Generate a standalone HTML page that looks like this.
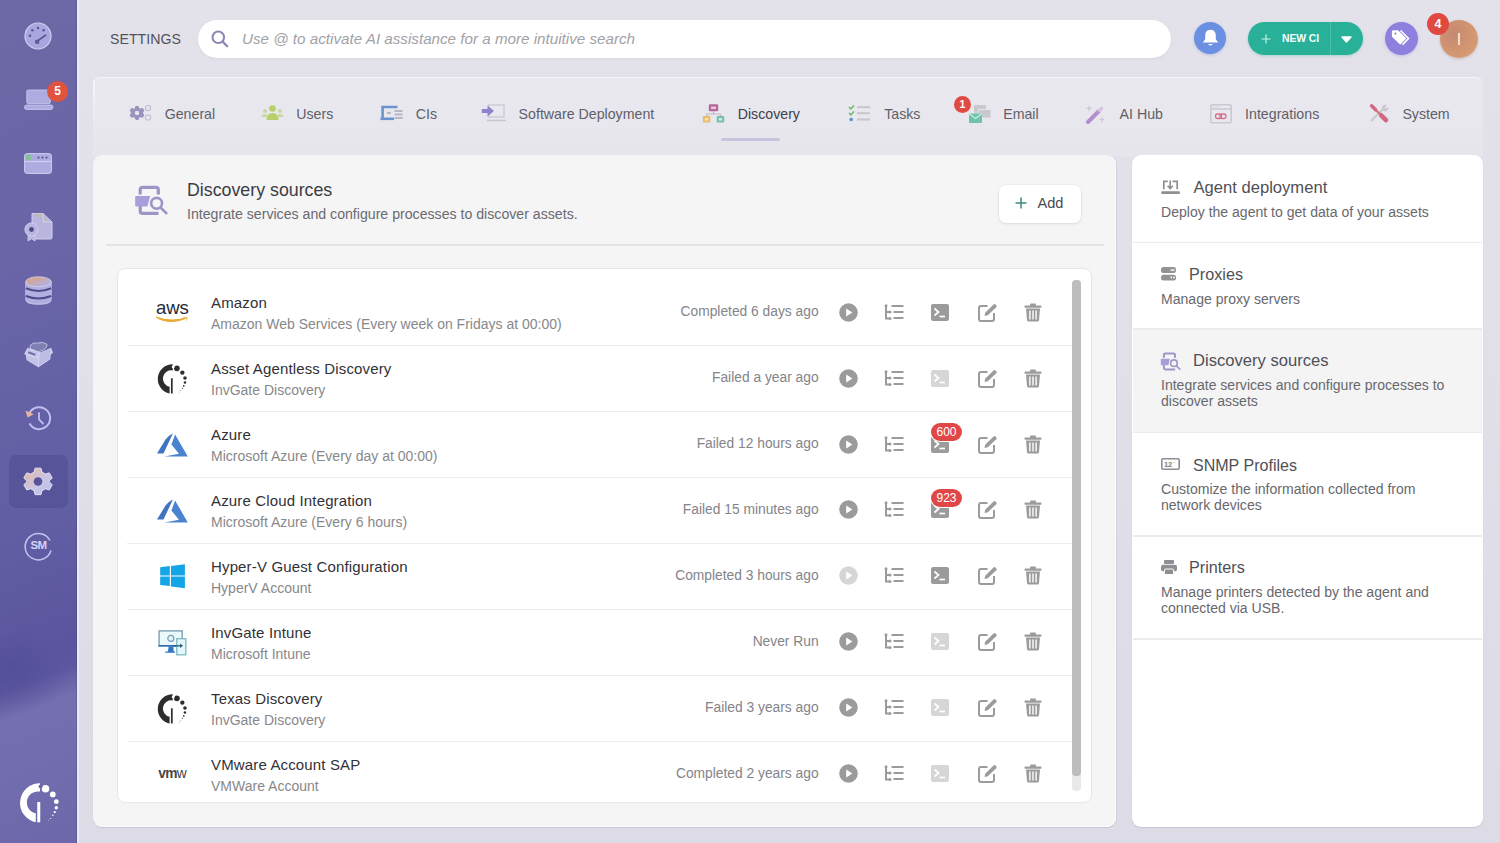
<!DOCTYPE html><html><head><meta charset='utf-8'><style>
*{box-sizing:border-box;margin:0;padding:0}
html,body{width:1500px;height:843px;overflow:hidden}
body{font-family:"Liberation Sans",sans-serif;background:linear-gradient(180deg,#e3e2eb 0%,#e1e0e9 45%,#dcdbe6 100%);position:relative;color:#333}
.a{position:absolute}
.t{position:absolute;white-space:nowrap;line-height:normal}
svg{position:absolute;overflow:visible}
</style></head><body>
<div class="a" style="left:0;top:0;width:77px;height:843px;background:linear-gradient(158.7deg,#6d69a6 0%,#6864a7 35%,#625ea4 62%,#5a559e 77%,#5c57a0 79.4%,#7470b0 82.8%,#716dae 89%,#6b67aa 100%)"></div>
<div class="a" style="left:0;top:560px;width:77px;height:200px;background:radial-gradient(ellipse 55px 45px at 12px 112px,rgba(78,72,148,.45),rgba(78,72,148,0))"></div>
<div class="a" style="left:76px;top:0;width:1px;height:843px;background:rgba(60,55,110,.25)"></div>
<div class="a" style="left:77px;top:0;width:1.5px;height:843px;background:rgba(240,240,252,.7)"></div>
<svg style="left:24px;top:22px" width="28" height="28" viewBox="0 0 28 28">
<circle cx="14" cy="14" r="13" fill="#a9a6dd" stroke="#cfcdf2" stroke-width="1.2"/>
<circle cx="14" cy="6" r="1.3" fill="#5d5899"/><circle cx="8.4" cy="8.2" r="1.3" fill="#5d5899"/><circle cx="19.6" cy="8.2" r="1.3" fill="#5d5899"/><circle cx="6" cy="13.8" r="1.3" fill="#5d5899"/>
<path d="M12 20 L21.5 13.2" stroke="#5d5899" stroke-width="1.8" stroke-linecap="round"/>
<rect x="11.2" y="17.8" width="4" height="4" rx="0.5" fill="#5d5899"/>
</svg>
<svg style="left:24px;top:89px" width="30" height="22" viewBox="0 0 30 22">
<rect x="2.8" y="1" width="23.6" height="13.6" rx="1.5" fill="#aeabe0" stroke="#cfcdf2" stroke-width="0.8"/>
<rect x="0.5" y="16" width="28.5" height="4.5" rx="2.2" fill="#aeabe0" stroke="#cfcdf2" stroke-width="0.8"/>
</svg>
<div class="a" style="left:47px;top:81px;width:21px;height:21px;border-radius:50%;background:#e0533f;color:#fff;font-size:12px;font-weight:700;text-align:center;line-height:21px">5</div>
<svg style="left:24px;top:153px" width="28" height="21" viewBox="0 0 28 21">
<rect x="0.6" y="0.6" width="26.8" height="19.8" rx="2.5" fill="#aeabe0" stroke="#cfcdf2" stroke-width="1"/>
<path d="M0.6 8.5 H27.4" stroke="#cfcdf2" stroke-width="1.2"/>
<rect x="2" y="1.8" width="5" height="5.5" fill="#7cc38a" opacity=".75"/>
<circle cx="14.5" cy="4.6" r="1.1" fill="#5d5899"/><circle cx="18.5" cy="4.6" r="1.1" fill="#5d5899"/><circle cx="22.5" cy="4.6" r="1.1" fill="#5d5899"/>
</svg>
<svg style="left:24px;top:212px" width="30" height="30" viewBox="0 0 30 30">
<path d="M8 1.5 H19 L28 10 V25.5 Q28 27 26.5 27 H9.5 Q8 27 8 25.5 Z" fill="#b9b5de" stroke="#d2d0ef" stroke-width="1"/>
<path d="M8 1.5 H19 V10 H28" fill="#c8c094" opacity=".55"/>
<path d="M19 1.5 V10 H28" fill="none" stroke="#d2d0ef" stroke-width="1"/>
<path d="M4 20 L4 29 L7.5 26.8 L11 29 L11 20 Z" fill="#b9b5de" stroke="#d2d0ef" stroke-width=".8"/>
<circle cx="7.5" cy="17.5" r="6.6" fill="#b9b5de" stroke="#d2d0ef" stroke-width="1"/>
<circle cx="7.5" cy="17.5" r="2.4" fill="#4f4a8a"/>
</svg>
<svg style="left:25px;top:276px" width="27" height="29" viewBox="0 0 27 29">
<defs><linearGradient id="dbg" x1="0" y1="0" x2="1" y2="1"><stop offset="0" stop-color="#e3a06e"/><stop offset=".8" stop-color="#b3b0e2"/></linearGradient></defs>
<path d="M0.8 5.5 V23.5 Q0.8 28.3 13.5 28.3 Q26.2 28.3 26.2 23.5 V5.5 Z" fill="#b1aee0" stroke="#d2d0ef" stroke-width=".8"/>
<path d="M0.8 12.3 Q13.5 17.5 26.2 12.3" fill="none" stroke="#4e4a8c" stroke-width="2"/>
<path d="M0.8 20 Q13.5 25 26.2 20" fill="none" stroke="#4e4a8c" stroke-width="2"/>
<ellipse cx="13.5" cy="5.8" rx="12.7" ry="5" fill="url(#dbg)" stroke="#d2d0ef" stroke-width=".8"/>
</svg>
<svg style="left:20px;top:336px" width="38" height="36" viewBox="0 0 38 36">
<path d="M10.5 9 Q13.5 5.8 17.5 7.2 Q22 5.2 27 8.2 Q27.5 11.5 24 13.5 L18.5 16 L11 13.2 Q9.6 11 10.5 9 Z" fill="#7f80b2" stroke="#c6c4ec" stroke-width=".9"/>
<path d="M18.8 17.6 L30.8 12.4 L29.8 23.2 L18.4 30.8 Z" fill="#bdbbe2" stroke="#d6d4f4" stroke-width=".9" stroke-linejoin="round"/>
<path d="M6.4 19.5 L18.8 17.6 L18.4 30.8 L7 23.8 Z" fill="#c3c1e6" stroke="#d6d4f4" stroke-width=".9" stroke-linejoin="round"/>
<path d="M4.7 18 L7.7 12.2 L19.8 16.6 L16.8 21.6 Z" fill="#c6c4ea" stroke="#d8d6f5" stroke-width=".9" stroke-linejoin="round"/>
<path d="M8.6 15.2 L15.8 17.9 L14.8 19.8 L8 17.3 Z" fill="#6f6ea8"/>
<path d="M30.8 12.4 L32.6 16.8 L29.9 18.2" fill="#c6c4ea" stroke="#d8d6f5" stroke-width=".9" stroke-linejoin="round"/>
</svg>
<svg style="left:24px;top:404px" width="28" height="28" viewBox="0 0 28 28">
<path d="M5.2 9.5 A11 11 0 1 1 5.5 19.5" fill="none" stroke="#c1bff0" stroke-width="2"/>
<path d="M1.5 6.5 L3.5 13.5 L9.8 10.2 Z" fill="#e9b49a"/>
<path d="M15 9 V15.5 L19 19.5" fill="none" stroke="#c1bff0" stroke-width="1.8" stroke-linecap="round"/>
</svg>
<div class="a" style="left:9px;top:455px;width:59px;height:53px;border-radius:7px;background:#58549a"></div>
<svg style="left:24px;top:467px" width="28" height="29" viewBox="0 0 28 29">
<defs><linearGradient id="gg" x1="0" y1="0" x2="1" y2="1"><stop offset="0" stop-color="#e8b694"/><stop offset=".55" stop-color="#c9c6e6"/><stop offset="1" stop-color="#bdbae6"/></linearGradient></defs>
<path d="M11 1 H17 L18 5 L21.5 7 L25.5 5.8 L28.5 11 L25.5 14 L25.5 15 L28.5 18 L25.5 23.2 L21.5 22 L18 24 L17 28 H11 L10 24 L6.5 22 L2.5 23.2 L-0.5 18 L2.5 15 L2.5 14 L-0.5 11 L2.5 5.8 L6.5 7 L10 5 Z" fill="url(#gg)" stroke="#e4e2f6" stroke-width="1" stroke-linejoin="round" transform="translate(0.3,0.2) scale(0.98)"/>
<circle cx="14" cy="14.5" r="4.3" fill="#58549a"/>
</svg>
<svg style="left:24px;top:531px" width="29" height="29" viewBox="0 0 29 29">
<path d="M26 9.5 A13.2 13.2 0 1 0 27 19.5" fill="none" stroke="#c6c3f0" stroke-width="1.5"/>
</svg>
<div class="t" style="left:24px;width:29px;text-align:center;top:538.5px;font-size:11.5px;color:#d4d2f5;letter-spacing:-0.5px;font-weight:700;-webkit-text-stroke:0px">SM</div>
<svg style="left:18.7px;top:782.6px" width="40" height="40" viewBox="0 0 40 40">
<path d="M21 0.3 A19.7 19.7 0 0 0 16.8 39.3 L16.8 30.3 A11 11 0 0 1 21 8.6 Z" fill="#ffffff"/>
<rect x="18.25" y="19" width="3" height="20.3" fill="#ffffff"/>
<circle cx="26.5" cy="5.8" r="3.8" fill="#ffffff"/>
<circle cx="21.6" cy="3.6" r="2" fill="#6b67aa"/>
<circle cx="33.8" cy="11.4" r="2.9" fill="#ffffff"/>
<circle cx="37.3" cy="18.7" r="2.4" fill="#ffffff"/>
<circle cx="37.3" cy="24.7" r="1.7" fill="#ffffff"/>
<circle cx="35.7" cy="29.1" r="1.15" fill="#ffffff"/>
<circle cx="33.8" cy="32.3" r=".8" fill="#ffffff"/>
<circle cx="31.6" cy="35.5" r=".6" fill="#ffffff"/>
<circle cx="29.4" cy="37.4" r=".45" fill="#ffffff"/>
</svg>
<div class="t" style="left:110px;top:30.75px;font-size:14.2px;color:#53525c;font-weight:400;font-style:normal;">SETTINGS</div>
<div class="a" style="left:198px;top:20px;width:973px;height:38px;border-radius:19px;background:#fff;box-shadow:0 1px 2px rgba(140,140,170,.15)"></div>
<svg style="left:211px;top:30px" width="18" height="18" viewBox="0 0 18 18">
<circle cx="7.3" cy="7.3" r="5.8" fill="none" stroke="#8985b5" stroke-width="2"/>
<path d="M11.6 11.6 L16.2 16.2" stroke="#8985b5" stroke-width="2.2" stroke-linecap="round"/></svg>
<div class="t" style="left:242px;top:29.54px;font-size:15.2px;color:#a2a2a8;font-weight:400;font-style:italic;">Use @ to activate AI assistance for a more intuitive search</div>
<div class="a" style="left:1194px;top:22px;width:32px;height:32px;border-radius:50%;background:#6b90e1;box-shadow:0 1px 3px rgba(80,110,200,.3)"></div>
<svg style="left:1201.5px;top:29px" width="17" height="18" viewBox="0 0 17 18">
<path d="M8.5 0.8 C4.6 0.8 3.2 3.8 3.2 7 V10.2 L0.8 13.6 H16.2 L13.8 10.2 V7 C13.8 3.8 12.4 0.8 8.5 0.8 Z" fill="#fff"/>
<path d="M6.2 15 Q8.5 18 10.8 15 Z" fill="#fff"/></svg>
<div class="a" style="left:1248px;top:22px;width:115px;height:33px;border-radius:17px;background:#29b099;box-shadow:0 1px 3px rgba(40,160,130,.3)"></div>
<div class="a" style="left:1330px;top:22px;width:1px;height:33px;background:#45c1ab"></div>
<svg style="left:1261px;top:34px" width="10" height="10" viewBox="0 0 10 10"><path d="M5 0.5 V9.5 M0.5 5 H9.5" stroke="#c9f2e8" stroke-width="1.2"/></svg>
<div class="t" style="left:1282px;top:32.89px;font-size:10.4px;color:#f4fffc;font-weight:700;font-style:normal;letter-spacing:-0.1px">NEW CI</div>
<svg style="left:1341px;top:36px" width="11" height="7" viewBox="0 0 11 7"><path d="M1 1 H10 L5.5 6 Z" fill="#fff" stroke="#fff" stroke-width="1.4" stroke-linejoin="round"/></svg>
<div class="a" style="left:1385px;top:22px;width:33px;height:33px;border-radius:50%;background:#8e80de;box-shadow:0 1px 3px rgba(120,100,210,.3)"></div>
<svg style="left:1391px;top:29px" width="22" height="18" viewBox="0 0 22 18">
<path d="M9.5 1.5 L17.5 9.5 L11.5 15.8" fill="none" stroke="#fff" stroke-width="1.6"/>
<path d="M1.5 2 V7.2 L9.2 14.8 L14.5 9.5 L6.8 1.8 Z" fill="#fff" stroke="#fff" stroke-width="1.2" stroke-linejoin="round"/>
<circle cx="4.4" cy="4.6" r="1.1" fill="#8e80de"/></svg>
<div class="a" style="left:1440px;top:20px;width:38px;height:38px;border-radius:50%;background:radial-gradient(circle at 35% 35%,#c78872,#d49a72 70%,#dba478);box-shadow:0 1px 3px rgba(150,100,80,.3)"></div>
<div class="a" style="left:1458px;top:33px;width:2px;height:12px;background:#f5dfc9"></div>
<div class="a" style="left:1427px;top:13px;width:22px;height:22px;border-radius:50%;background:#e0493f;color:#fff;font-size:12.5px;font-weight:700;text-align:center;line-height:22px">4</div>
<div class="a" style="left:93px;top:77px;width:1390px;height:80px;border-radius:7px 7px 0 0;background:linear-gradient(180deg,#e9e8ef 0%,#e8e7ee 60%,#e6e5ec 100%);border-top:1.5px solid #f5f5f9"></div>
<div class="t" style="left:164.7px;top:105.65px;font-size:14.2px;color:#605f69;font-weight:400;font-style:normal;">General</div>
<div class="t" style="left:296.2px;top:105.65px;font-size:14.2px;color:#605f69;font-weight:400;font-style:normal;">Users</div>
<div class="t" style="left:415.8px;top:105.65px;font-size:14.2px;color:#605f69;font-weight:400;font-style:normal;">CIs</div>
<div class="t" style="left:518.6px;top:105.65px;font-size:14.2px;color:#605f69;font-weight:400;font-style:normal;">Software Deployment</div>
<div class="t" style="left:737.7px;top:105.65px;font-size:14.2px;color:#3f3f48;font-weight:400;font-style:normal;">Discovery</div>
<div class="t" style="left:884.2px;top:105.65px;font-size:14.2px;color:#605f69;font-weight:400;font-style:normal;">Tasks</div>
<div class="t" style="left:1003.2px;top:105.65px;font-size:14.2px;color:#605f69;font-weight:400;font-style:normal;">Email</div>
<div class="t" style="left:1119.6000000000001px;top:105.65px;font-size:14.2px;color:#605f69;font-weight:400;font-style:normal;">AI Hub</div>
<div class="t" style="left:1245.1000000000001px;top:105.65px;font-size:14.2px;color:#605f69;font-weight:400;font-style:normal;">Integrations</div>
<div class="t" style="left:1402.4px;top:105.65px;font-size:14.2px;color:#605f69;font-weight:400;font-style:normal;">System</div>
<div class="a" style="left:93px;top:80px;width:2px;height:50px;background:linear-gradient(180deg,rgba(246,246,250,.9),rgba(246,246,250,0))"></div>
<div class="a" style="left:721px;top:138px;width:59px;height:3px;border-radius:2px;background:#c8c4de"></div>
<svg style="left:129px;top:104px" width="23" height="18" viewBox="0 0 23 18">
<path d="M7 2.5 L9 2.5 L9.6 4.4 L11.4 5.4 L13.2 4.6 L14.6 6.4 L13.6 8.2 V9.6 L14.6 11.4 L13.2 13.2 L11.4 12.4 L9.6 13.4 L9 15.3 H7 L6.4 13.4 L4.6 12.4 L2.8 13.2 L1.4 11.4 L2.4 9.6 V8.2 L1.4 6.4 L2.8 4.6 L4.6 5.4 L6.4 4.4 Z" fill="#9b93bd" stroke="#9b93bd" stroke-width="1.2" stroke-linejoin="round"/>
<circle cx="8" cy="8.9" r="2.2" fill="#e8e7ee"/>
<circle cx="19" cy="4" r="2.6" fill="none" stroke="#c6c2da" stroke-width="1.3"/>
<circle cx="19" cy="13.5" r="2.6" fill="none" stroke="#c6c2da" stroke-width="1.3"/>
</svg>
<svg style="left:261px;top:104px" width="23" height="18" viewBox="0 0 23 18">
<circle cx="11.5" cy="4.5" r="3.3" fill="#b8d06a"/>
<path d="M5.5 16 Q5.5 9 11.5 9 Q17.5 9 17.5 16 Z" fill="#b8d06a"/>
<circle cx="4" cy="7" r="2" fill="#cbd6a4"/><circle cx="19" cy="7" r="2" fill="#cbd6a4"/>
<path d="M0.5 13 Q0.5 10 4 10 Q6 10 6.5 11.5 L5.5 13 Z" fill="#cbd6a4"/><path d="M22.5 13 Q22.5 10 19 10 Q17 10 16.5 11.5 L17.5 13 Z" fill="#cbd6a4"/>
</svg>
<svg style="left:380px;top:104px" width="23" height="18" viewBox="0 0 23 18">
<path d="M2.6 14 V3 H17.5" fill="none" stroke="#6b93cf" stroke-width="2.6"/>
<path d="M0.5 14.8 H14" stroke="#6b93cf" stroke-width="2.6"/>
<rect x="14.5" y="6" width="8" height="2" fill="#b3b7c6"/><rect x="14.5" y="9.5" width="8" height="2" fill="#b3b7c6"/><rect x="14.5" y="13" width="8" height="2" fill="#b3b7c6"/>
<rect x="7" y="8" width="4" height="2" fill="#b3b7c6"/>
</svg>
<svg style="left:481px;top:103px" width="26" height="20" viewBox="0 0 26 20">
<rect x="7.5" y="2" width="15.5" height="12" fill="none" stroke="#c7c5d3" stroke-width="1.2"/>
<path d="M6 17.5 H25" stroke="#c7c5d3" stroke-width="1.6"/>
<path d="M0.8 6 H6.5 V2.5 L13 8 L6.5 13.5 V10 H0.8 Z" fill="#8f82cc"/>
</svg>
<svg style="left:702px;top:104px" width="23" height="20" viewBox="0 0 23 20">
<rect x="6.8" y="0.3" width="9.4" height="7" rx="1.2" fill="#b7679b"/><rect x="9" y="2.6" width="5" height="2.4" fill="#e9c6dc"/>
<path d="M11.5 7 V10 M4.5 10 H18.5 M4.5 10 V12 M18.5 10 V12" stroke="#c3b8c0" stroke-width="1.2"/>
<rect x="0.8" y="12" width="7.5" height="6.5" rx="1" fill="#e9bd6c"/><rect x="14.7" y="12" width="7.5" height="6.5" rx="1" fill="#73bea8"/>
<rect x="2.8" y="14" width="3.5" height="2.5" fill="#f8e2b0"/><rect x="16.7" y="14" width="3.5" height="2.5" fill="#c8ece3"/>
</svg>
<svg style="left:848px;top:104px" width="23" height="18" viewBox="0 0 23 18">
<path d="M1 3 L2.8 4.8 L6 1.5" fill="none" stroke="#6bbf6a" stroke-width="1.6"/>
<path d="M1 9 L2.8 10.8 L6 7.5" fill="none" stroke="#6bbf6a" stroke-width="1.6"/>
<circle cx="3.2" cy="15.5" r="1.8" fill="#5a8fc0"/>
<rect x="9" y="2.2" width="13" height="2" fill="#c6c6cc"/><rect x="9" y="8.2" width="13" height="2" fill="#c6c6cc"/><rect x="9" y="14.5" width="13" height="2" fill="#c6c6cc"/>
</svg>
<svg style="left:968px;top:104px" width="24" height="20" viewBox="0 0 24 20">
<rect x="6" y="1" width="12" height="8" rx="1" fill="#c8c8ce"/>
<rect x="10" y="5.5" width="13" height="8.5" rx="1" fill="#c8c8ce" stroke="#e8e7ee" stroke-width="1"/>
<rect x="1" y="9.5" width="13" height="9.5" rx="1" fill="#6dc4a8"/>
<path d="M1 9.5 L7.5 14.5 L14 9.5" fill="none" stroke="#c9efe3" stroke-width="1.3"/>
</svg>
<div class="a" style="left:954px;top:96px;width:17px;height:17px;border-radius:50%;background:#df4a43;color:#fff;font-size:10.5px;font-weight:700;text-align:center;line-height:17px;box-shadow:0 0 0 1px #e9e8ef">1</div>
<svg style="left:1085px;top:104px" width="20" height="20" viewBox="0 0 20 20">
<path d="M3 18 L14 7" stroke="#b58ecf" stroke-width="4" stroke-linecap="round"/>
<path d="M14.5 6.5 L16.5 4.5" stroke="#d6c4e4" stroke-width="3.5" stroke-linecap="round"/>
<path d="M4 2 V7 M1.5 4.5 H6.5" stroke="#cac4d6" stroke-width="1.2"/>
<path d="M17 13 V18 M14.5 15.5 H19.5" stroke="#cac4d6" stroke-width="1.2"/>
</svg>
<svg style="left:1210px;top:104px" width="22" height="20" viewBox="0 0 22 20">
<rect x="0.8" y="0.8" width="20.4" height="18" rx="1.5" fill="#e9e8ef" stroke="#c9c8d0" stroke-width="1.5"/>
<path d="M0.8 5 H21" stroke="#c9c8d0" stroke-width="1.5"/>
<circle cx="3.5" cy="3" r=".7" fill="#c9c8d0"/><circle cx="6" cy="3" r=".7" fill="#c9c8d0"/><circle cx="8.5" cy="3" r=".7" fill="#c9c8d0"/>
<rect x="5.5" y="10" width="6" height="4.5" rx="2.2" fill="none" stroke="#d0708f" stroke-width="1.3"/>
<rect x="10" y="10" width="6" height="4.5" rx="2.2" fill="none" stroke="#d0708f" stroke-width="1.3"/>
</svg>
<svg style="left:1369px;top:104px" width="20" height="19" viewBox="0 0 20 19">
<path d="M2.5 16.5 L14 5" stroke="#c9c9cd" stroke-width="2.2" stroke-linecap="round"/>
<path d="M13 2.5 Q15 0.2 18 1 L16 3.6 L17 4.8 L19.2 2.8 Q19.8 6 17.2 7.2 Q15.5 7.8 14 6.5 Z" fill="#c9c9cd"/>
<path d="M2.6 1.8 L6.6 5.8" stroke="#d4687f" stroke-width="3.6" stroke-linecap="round"/>
<path d="M6 5.2 L12.5 11.6" stroke="#d4687f" stroke-width="1.9"/>
<path d="M12.2 11.3 L17 16.2" stroke="#d4687f" stroke-width="4.6" stroke-linecap="round"/>
</svg>
<div class="a" style="left:93px;top:155px;width:1023px;height:672px;border-radius:9px;background:#f5f5f6;box-shadow:inset -1px -1px 0 #fbfbfd,1px 0 0 rgba(190,190,200,.35),0 1px 1px rgba(150,150,165,.3)"></div>
<svg style="left:134px;top:185px" width="34" height="31" viewBox="0 0 34 31">
<path d="M6.2 9.5 V4.6 Q6.2 2.3 8.5 2.3 H22 Q24.3 2.3 24.3 4.6 V9.5" fill="none" stroke="#9c96c6" stroke-width="3.2"/>
<path d="M6.2 21 V26 Q6.2 28.4 8.6 28.4 H24.5" fill="none" stroke="#9c96c6" stroke-width="3.2"/>
<path d="M2.2 11.1 H16.2 L13.4 21.6 H2.2 Q1.2 21.6 1.2 20.6 V12.1 Q1.2 11.1 2.2 11.1 Z" fill="#a79fdc"/>
<circle cx="22.6" cy="18.3" r="5.6" fill="#f5f5f6" stroke="#f5f5f6" stroke-width="4.5"/>
<circle cx="22.6" cy="18.3" r="5.4" fill="#f5f5f6" stroke="#9c96c6" stroke-width="2.6"/>
<path d="M27 23 L32.4 28.2" stroke="#9c96c6" stroke-width="2.6" stroke-linecap="round"/>
</svg>
<div class="t" style="left:187px;top:180.29px;font-size:17.8px;color:#3c3c42;font-weight:400;font-style:normal;">Discovery sources</div>
<div class="t" style="left:187px;top:205.69px;font-size:14.15px;color:#6a6a70;font-weight:400;font-style:normal;">Integrate services and configure processes to discover assets.</div>
<div class="a" style="left:999px;top:185px;width:82px;height:38px;border-radius:7px;background:#fff;box-shadow:0 1px 3px rgba(0,0,0,.09),0 0 0 1px rgba(0,0,0,.025)"></div>
<svg style="left:1015px;top:197px" width="12" height="12" viewBox="0 0 12 12"><path d="M6 0.5 V11.5 M0.5 6 H11.5" stroke="#3f8c7c" stroke-width="1.5"/></svg>
<div class="t" style="left:1037.5px;top:195.19px;font-size:14.6px;color:#4a4a50;font-weight:400;font-style:normal;">Add</div>
<div class="a" style="left:106px;top:244px;width:998px;height:1.5px;background:#e3e3e6"></div>
<div class="a" style="left:117px;top:268px;width:975px;height:535px;border-radius:8px;background:#fff;border:1px solid #e6e6e9"></div>
<div class="a" style="left:1072px;top:280px;width:9px;height:511px;border-radius:4px;background:#e8e8e8"></div>
<div class="a" style="left:1072px;top:280px;width:9px;height:496px;border-radius:4px;background:#bdbdbd"></div>
<div class="a" style="left:127px;top:345.0px;width:945px;height:1.2px;background:#ececee"></div>
<div class="t" style="left:211px;top:293.83px;font-size:15px;color:#313136;font-weight:400;font-style:normal;letter-spacing:.15px">Amazon</div>
<div class="t" style="left:211px;top:315.53px;font-size:14px;color:#88888b;font-weight:400;font-style:normal;">Amazon Web Services (Every week on Fridays at 00:00)</div>
<div class="t" style="right:681.4px;top:304.41px;font-size:13.8px;color:#848489;">Completed 6 days ago</div>
<svg style="left:838.5px;top:302.8px" width="19" height="19" viewBox="0 0 19 19"><circle cx="9.5" cy="9.5" r="9.3" fill="#9b9b9b"/><path d="M7.2 5.6 L13.4 9.5 L7.2 13.4 Z" fill="#fff"/></svg>
<svg style="left:884px;top:303.8px" width="20" height="17" viewBox="0 0 20 17">
<path d="M2 1.5 V14.5 H5" fill="none" stroke="#9b9b9b" stroke-width="2"/><path d="M2 8 H5" stroke="#9b9b9b" stroke-width="2"/>
<rect x="7.5" y="1" width="12" height="2" fill="#9b9b9b"/><rect x="9.5" y="7" width="10" height="2" fill="#9b9b9b"/><rect x="9.5" y="13" width="10" height="2" fill="#9b9b9b"/>
<circle cx="2" cy="1.8" r="1.5" fill="#9b9b9b"/><circle cx="6" cy="8" r="1.5" fill="#9b9b9b"/><circle cx="6" cy="14.5" r="1.5" fill="#9b9b9b"/>
</svg>
<svg style="left:931px;top:303.8px" width="18" height="17" viewBox="0 0 18 17"><rect x="0" y="0" width="18" height="17" rx="2" fill="#9b9b9b"/><path d="M3.5 4.5 L7.5 8 L3.5 11.5" fill="none" stroke="#fff" stroke-width="1.7"/><path d="M8.5 12.5 H14" stroke="#fff" stroke-width="1.7"/></svg>
<svg style="left:977.5px;top:302.8px" width="20" height="19" viewBox="0 0 20 19">
<path d="M9.5 3 H3 Q1 3 1 5 V16 Q1 18 3 18 H14 Q16 18 16 16 V10" fill="none" stroke="#9b9b9b" stroke-width="2"/>
<path d="M6.5 13 L7.2 9.8 L15.5 1.5 Q16.5 0.6 17.5 1.5 L18.2 2.2 Q19 3.2 18.2 4.2 L9.8 12.3 Z" fill="#9b9b9b"/>
</svg>
<svg style="left:1023.5px;top:302.8px" width="18" height="19" viewBox="0 0 18 19">
<rect x="0.5" y="2.5" width="17" height="2.2" rx=".8" fill="#9b9b9b"/><rect x="6" y="0.5" width="6" height="2.5" rx="1" fill="#9b9b9b"/>
<path d="M2 5.5 H16 L15 17 Q14.9 18.5 13.5 18.5 H4.5 Q3.1 18.5 3 17 Z" fill="#9b9b9b"/>
<rect x="5.2" y="7.5" width="1.4" height="9" fill="#fff"/><rect x="8.3" y="7.5" width="1.4" height="9" fill="#fff"/><rect x="11.4" y="7.5" width="1.4" height="9" fill="#fff"/>
</svg>
<svg style="left:155px;top:301.8px" width="36" height="24" viewBox="0 0 36 24">
<text x="17.4" y="12.3" text-anchor="middle" font-family="Liberation Sans" font-size="18.6" fill="#232a38" letter-spacing="-0.1">aws</text>
<path d="M1.5 15.2 Q15 23.5 31.5 15.8 Q16 20.5 1.5 15.2 Z" fill="#eaa935" stroke="#eaa935" stroke-width="1.2" stroke-linejoin="round"/>
<path d="M28.5 15.3 L32.2 15.3 L31.5 18.2" fill="none" stroke="#f0bd5a" stroke-width="1" stroke-linecap="round"/>
</svg>
<div class="a" style="left:127px;top:411.0px;width:945px;height:1.2px;background:#ececee"></div>
<div class="t" style="left:211px;top:359.83px;font-size:15px;color:#313136;font-weight:400;font-style:normal;letter-spacing:.15px">Asset Agentless Discovery</div>
<div class="t" style="left:211px;top:381.53px;font-size:14px;color:#88888b;font-weight:400;font-style:normal;">InvGate Discovery</div>
<div class="t" style="right:681.4px;top:370.41px;font-size:13.8px;color:#848489;">Failed a year ago</div>
<svg style="left:838.5px;top:368.6px" width="19" height="19" viewBox="0 0 19 19"><circle cx="9.5" cy="9.5" r="9.3" fill="#9b9b9b"/><path d="M7.2 5.6 L13.4 9.5 L7.2 13.4 Z" fill="#fff"/></svg>
<svg style="left:884px;top:369.6px" width="20" height="17" viewBox="0 0 20 17">
<path d="M2 1.5 V14.5 H5" fill="none" stroke="#9b9b9b" stroke-width="2"/><path d="M2 8 H5" stroke="#9b9b9b" stroke-width="2"/>
<rect x="7.5" y="1" width="12" height="2" fill="#9b9b9b"/><rect x="9.5" y="7" width="10" height="2" fill="#9b9b9b"/><rect x="9.5" y="13" width="10" height="2" fill="#9b9b9b"/>
<circle cx="2" cy="1.8" r="1.5" fill="#9b9b9b"/><circle cx="6" cy="8" r="1.5" fill="#9b9b9b"/><circle cx="6" cy="14.5" r="1.5" fill="#9b9b9b"/>
</svg>
<svg style="left:931px;top:369.6px" width="18" height="17" viewBox="0 0 18 17"><rect x="0" y="0" width="18" height="17" rx="2" fill="#d6d6d6"/><path d="M3.5 4.5 L7.5 8 L3.5 11.5" fill="none" stroke="#fff" stroke-width="1.7"/><path d="M8.5 12.5 H14" stroke="#fff" stroke-width="1.7"/></svg>
<svg style="left:977.5px;top:368.6px" width="20" height="19" viewBox="0 0 20 19">
<path d="M9.5 3 H3 Q1 3 1 5 V16 Q1 18 3 18 H14 Q16 18 16 16 V10" fill="none" stroke="#9b9b9b" stroke-width="2"/>
<path d="M6.5 13 L7.2 9.8 L15.5 1.5 Q16.5 0.6 17.5 1.5 L18.2 2.2 Q19 3.2 18.2 4.2 L9.8 12.3 Z" fill="#9b9b9b"/>
</svg>
<svg style="left:1023.5px;top:368.6px" width="18" height="19" viewBox="0 0 18 19">
<rect x="0.5" y="2.5" width="17" height="2.2" rx=".8" fill="#9b9b9b"/><rect x="6" y="0.5" width="6" height="2.5" rx="1" fill="#9b9b9b"/>
<path d="M2 5.5 H16 L15 17 Q14.9 18.5 13.5 18.5 H4.5 Q3.1 18.5 3 17 Z" fill="#9b9b9b"/>
<rect x="5.2" y="7.5" width="1.4" height="9" fill="#fff"/><rect x="8.3" y="7.5" width="1.4" height="9" fill="#fff"/><rect x="11.4" y="7.5" width="1.4" height="9" fill="#fff"/>
</svg>
<svg style="left:157.3px;top:363.8px" width="30.0" height="30.0" viewBox="0 0 40 40">
<path d="M21 0.3 A19.7 19.7 0 0 0 16.8 39.3 L16.8 30.3 A11 11 0 0 1 21 8.6 Z" fill="#2d2d2d"/>
<rect x="18.6" y="19" width="2.3" height="20.3" fill="#2d2d2d"/>
<circle cx="26.5" cy="5.8" r="3.8" fill="#2d2d2d"/>
<circle cx="21.6" cy="3.6" r="2" fill="#fff"/>
<circle cx="33.8" cy="11.4" r="2.9" fill="#2d2d2d"/>
<circle cx="37.3" cy="18.7" r="2.4" fill="#2d2d2d"/>
<circle cx="37.3" cy="24.7" r="1.7" fill="#2d2d2d"/>
<circle cx="35.7" cy="29.1" r="1.15" fill="#2d2d2d"/>
<circle cx="33.8" cy="32.3" r=".8" fill="#2d2d2d"/>
<circle cx="31.6" cy="35.5" r=".6" fill="#2d2d2d"/>
<circle cx="29.4" cy="37.4" r=".45" fill="#2d2d2d"/>
</svg>
<div class="a" style="left:127px;top:477.0px;width:945px;height:1.2px;background:#ececee"></div>
<div class="t" style="left:211px;top:425.83px;font-size:15px;color:#313136;font-weight:400;font-style:normal;letter-spacing:.15px">Azure</div>
<div class="t" style="left:211px;top:447.53px;font-size:14px;color:#88888b;font-weight:400;font-style:normal;">Microsoft Azure (Every day at 00:00)</div>
<div class="t" style="right:681.4px;top:436.41px;font-size:13.8px;color:#848489;">Failed 12 hours ago</div>
<svg style="left:838.5px;top:434.5px" width="19" height="19" viewBox="0 0 19 19"><circle cx="9.5" cy="9.5" r="9.3" fill="#9b9b9b"/><path d="M7.2 5.6 L13.4 9.5 L7.2 13.4 Z" fill="#fff"/></svg>
<svg style="left:884px;top:435.5px" width="20" height="17" viewBox="0 0 20 17">
<path d="M2 1.5 V14.5 H5" fill="none" stroke="#9b9b9b" stroke-width="2"/><path d="M2 8 H5" stroke="#9b9b9b" stroke-width="2"/>
<rect x="7.5" y="1" width="12" height="2" fill="#9b9b9b"/><rect x="9.5" y="7" width="10" height="2" fill="#9b9b9b"/><rect x="9.5" y="13" width="10" height="2" fill="#9b9b9b"/>
<circle cx="2" cy="1.8" r="1.5" fill="#9b9b9b"/><circle cx="6" cy="8" r="1.5" fill="#9b9b9b"/><circle cx="6" cy="14.5" r="1.5" fill="#9b9b9b"/>
</svg>
<svg style="left:931px;top:435.5px" width="18" height="17" viewBox="0 0 18 17"><rect x="0" y="0" width="18" height="17" rx="2" fill="#9b9b9b"/><path d="M3.5 4.5 L7.5 8 L3.5 11.5" fill="none" stroke="#fff" stroke-width="1.7"/><path d="M8.5 12.5 H14" stroke="#fff" stroke-width="1.7"/></svg>
<svg style="left:977.5px;top:434.5px" width="20" height="19" viewBox="0 0 20 19">
<path d="M9.5 3 H3 Q1 3 1 5 V16 Q1 18 3 18 H14 Q16 18 16 16 V10" fill="none" stroke="#9b9b9b" stroke-width="2"/>
<path d="M6.5 13 L7.2 9.8 L15.5 1.5 Q16.5 0.6 17.5 1.5 L18.2 2.2 Q19 3.2 18.2 4.2 L9.8 12.3 Z" fill="#9b9b9b"/>
</svg>
<svg style="left:1023.5px;top:434.5px" width="18" height="19" viewBox="0 0 18 19">
<rect x="0.5" y="2.5" width="17" height="2.2" rx=".8" fill="#9b9b9b"/><rect x="6" y="0.5" width="6" height="2.5" rx="1" fill="#9b9b9b"/>
<path d="M2 5.5 H16 L15 17 Q14.9 18.5 13.5 18.5 H4.5 Q3.1 18.5 3 17 Z" fill="#9b9b9b"/>
<rect x="5.2" y="7.5" width="1.4" height="9" fill="#fff"/><rect x="8.3" y="7.5" width="1.4" height="9" fill="#fff"/><rect x="11.4" y="7.5" width="1.4" height="9" fill="#fff"/>
</svg>
<div class="a" style="left:931px;top:423.0px;width:31px;height:18px;border-radius:9px;background:#e04848;color:#fff;font-size:12px;text-align:center;line-height:18px;box-shadow:0 0 0 1px #fff">600</div>
<svg style="left:155px;top:432.3px" width="34" height="26" viewBox="0 0 34 26">
<path d="M2 21.6 L8.5 21.6 L18 1.3 Q13 4 10.5 7.5 Z" fill="#3e74c2"/>
<path d="M20.1 2.4 L32.8 24.6 H9.4 L24 21.8 L16.4 12.6 Z" fill="#4a83cf"/>
</svg>
<div class="a" style="left:127px;top:543.0px;width:945px;height:1.2px;background:#ececee"></div>
<div class="t" style="left:211px;top:491.83px;font-size:15px;color:#313136;font-weight:400;font-style:normal;letter-spacing:.15px">Azure Cloud Integration</div>
<div class="t" style="left:211px;top:513.53px;font-size:14px;color:#88888b;font-weight:400;font-style:normal;">Microsoft Azure (Every 6 hours)</div>
<div class="t" style="right:681.4px;top:502.41px;font-size:13.8px;color:#848489;">Failed 15 minutes ago</div>
<svg style="left:838.5px;top:500.4px" width="19" height="19" viewBox="0 0 19 19"><circle cx="9.5" cy="9.5" r="9.3" fill="#9b9b9b"/><path d="M7.2 5.6 L13.4 9.5 L7.2 13.4 Z" fill="#fff"/></svg>
<svg style="left:884px;top:501.4px" width="20" height="17" viewBox="0 0 20 17">
<path d="M2 1.5 V14.5 H5" fill="none" stroke="#9b9b9b" stroke-width="2"/><path d="M2 8 H5" stroke="#9b9b9b" stroke-width="2"/>
<rect x="7.5" y="1" width="12" height="2" fill="#9b9b9b"/><rect x="9.5" y="7" width="10" height="2" fill="#9b9b9b"/><rect x="9.5" y="13" width="10" height="2" fill="#9b9b9b"/>
<circle cx="2" cy="1.8" r="1.5" fill="#9b9b9b"/><circle cx="6" cy="8" r="1.5" fill="#9b9b9b"/><circle cx="6" cy="14.5" r="1.5" fill="#9b9b9b"/>
</svg>
<svg style="left:931px;top:501.4px" width="18" height="17" viewBox="0 0 18 17"><rect x="0" y="0" width="18" height="17" rx="2" fill="#9b9b9b"/><path d="M3.5 4.5 L7.5 8 L3.5 11.5" fill="none" stroke="#fff" stroke-width="1.7"/><path d="M8.5 12.5 H14" stroke="#fff" stroke-width="1.7"/></svg>
<svg style="left:977.5px;top:500.4px" width="20" height="19" viewBox="0 0 20 19">
<path d="M9.5 3 H3 Q1 3 1 5 V16 Q1 18 3 18 H14 Q16 18 16 16 V10" fill="none" stroke="#9b9b9b" stroke-width="2"/>
<path d="M6.5 13 L7.2 9.8 L15.5 1.5 Q16.5 0.6 17.5 1.5 L18.2 2.2 Q19 3.2 18.2 4.2 L9.8 12.3 Z" fill="#9b9b9b"/>
</svg>
<svg style="left:1023.5px;top:500.4px" width="18" height="19" viewBox="0 0 18 19">
<rect x="0.5" y="2.5" width="17" height="2.2" rx=".8" fill="#9b9b9b"/><rect x="6" y="0.5" width="6" height="2.5" rx="1" fill="#9b9b9b"/>
<path d="M2 5.5 H16 L15 17 Q14.9 18.5 13.5 18.5 H4.5 Q3.1 18.5 3 17 Z" fill="#9b9b9b"/>
<rect x="5.2" y="7.5" width="1.4" height="9" fill="#fff"/><rect x="8.3" y="7.5" width="1.4" height="9" fill="#fff"/><rect x="11.4" y="7.5" width="1.4" height="9" fill="#fff"/>
</svg>
<div class="a" style="left:931px;top:488.9px;width:31px;height:18px;border-radius:9px;background:#e04848;color:#fff;font-size:12px;text-align:center;line-height:18px;box-shadow:0 0 0 1px #fff">923</div>
<svg style="left:155px;top:498.3px" width="34" height="26" viewBox="0 0 34 26">
<path d="M2 21.6 L8.5 21.6 L18 1.3 Q13 4 10.5 7.5 Z" fill="#3e74c2"/>
<path d="M20.1 2.4 L32.8 24.6 H9.4 L24 21.8 L16.4 12.6 Z" fill="#4a83cf"/>
</svg>
<div class="a" style="left:127px;top:609.0px;width:945px;height:1.2px;background:#ececee"></div>
<div class="t" style="left:211px;top:557.82px;font-size:15px;color:#313136;font-weight:400;font-style:normal;letter-spacing:.15px">Hyper-V Guest Configuration</div>
<div class="t" style="left:211px;top:579.53px;font-size:14px;color:#88888b;font-weight:400;font-style:normal;">HyperV Account</div>
<div class="t" style="right:681.4px;top:568.41px;font-size:13.8px;color:#848489;">Completed 3 hours ago</div>
<svg style="left:838.5px;top:566.2px" width="19" height="19" viewBox="0 0 19 19"><circle cx="9.5" cy="9.5" r="9.3" fill="#d6d6d6"/><path d="M7.2 5.6 L13.4 9.5 L7.2 13.4 Z" fill="#fff"/></svg>
<svg style="left:884px;top:567.2px" width="20" height="17" viewBox="0 0 20 17">
<path d="M2 1.5 V14.5 H5" fill="none" stroke="#9b9b9b" stroke-width="2"/><path d="M2 8 H5" stroke="#9b9b9b" stroke-width="2"/>
<rect x="7.5" y="1" width="12" height="2" fill="#9b9b9b"/><rect x="9.5" y="7" width="10" height="2" fill="#9b9b9b"/><rect x="9.5" y="13" width="10" height="2" fill="#9b9b9b"/>
<circle cx="2" cy="1.8" r="1.5" fill="#9b9b9b"/><circle cx="6" cy="8" r="1.5" fill="#9b9b9b"/><circle cx="6" cy="14.5" r="1.5" fill="#9b9b9b"/>
</svg>
<svg style="left:931px;top:567.2px" width="18" height="17" viewBox="0 0 18 17"><rect x="0" y="0" width="18" height="17" rx="2" fill="#9b9b9b"/><path d="M3.5 4.5 L7.5 8 L3.5 11.5" fill="none" stroke="#fff" stroke-width="1.7"/><path d="M8.5 12.5 H14" stroke="#fff" stroke-width="1.7"/></svg>
<svg style="left:977.5px;top:566.2px" width="20" height="19" viewBox="0 0 20 19">
<path d="M9.5 3 H3 Q1 3 1 5 V16 Q1 18 3 18 H14 Q16 18 16 16 V10" fill="none" stroke="#9b9b9b" stroke-width="2"/>
<path d="M6.5 13 L7.2 9.8 L15.5 1.5 Q16.5 0.6 17.5 1.5 L18.2 2.2 Q19 3.2 18.2 4.2 L9.8 12.3 Z" fill="#9b9b9b"/>
</svg>
<svg style="left:1023.5px;top:566.2px" width="18" height="19" viewBox="0 0 18 19">
<rect x="0.5" y="2.5" width="17" height="2.2" rx=".8" fill="#9b9b9b"/><rect x="6" y="0.5" width="6" height="2.5" rx="1" fill="#9b9b9b"/>
<path d="M2 5.5 H16 L15 17 Q14.9 18.5 13.5 18.5 H4.5 Q3.1 18.5 3 17 Z" fill="#9b9b9b"/>
<rect x="5.2" y="7.5" width="1.4" height="9" fill="#fff"/><rect x="8.3" y="7.5" width="1.4" height="9" fill="#fff"/><rect x="11.4" y="7.5" width="1.4" height="9" fill="#fff"/>
</svg>
<svg style="left:160px;top:564.3px" width="26" height="26" viewBox="0 0 26 26">
<path d="M0.2 3.2 L9.8 2 V11.4 H0.2 Z M11 1.9 L24.9 0.2 V11.4 H11 Z M0.2 12.5 H9.8 V22 L0.2 20.9 Z M11 12.5 H24.9 V24.2 L11 22.6 Z" fill="#14a5e6"/>
</svg>
<div class="a" style="left:127px;top:675.0px;width:945px;height:1.2px;background:#ececee"></div>
<div class="t" style="left:211px;top:623.82px;font-size:15px;color:#313136;font-weight:400;font-style:normal;letter-spacing:.15px">InvGate Intune</div>
<div class="t" style="left:211px;top:645.53px;font-size:14px;color:#88888b;font-weight:400;font-style:normal;">Microsoft Intune</div>
<div class="t" style="right:681.4px;top:634.41px;font-size:13.8px;color:#848489;">Never Run</div>
<svg style="left:838.5px;top:632.0px" width="19" height="19" viewBox="0 0 19 19"><circle cx="9.5" cy="9.5" r="9.3" fill="#9b9b9b"/><path d="M7.2 5.6 L13.4 9.5 L7.2 13.4 Z" fill="#fff"/></svg>
<svg style="left:884px;top:633.0px" width="20" height="17" viewBox="0 0 20 17">
<path d="M2 1.5 V14.5 H5" fill="none" stroke="#9b9b9b" stroke-width="2"/><path d="M2 8 H5" stroke="#9b9b9b" stroke-width="2"/>
<rect x="7.5" y="1" width="12" height="2" fill="#9b9b9b"/><rect x="9.5" y="7" width="10" height="2" fill="#9b9b9b"/><rect x="9.5" y="13" width="10" height="2" fill="#9b9b9b"/>
<circle cx="2" cy="1.8" r="1.5" fill="#9b9b9b"/><circle cx="6" cy="8" r="1.5" fill="#9b9b9b"/><circle cx="6" cy="14.5" r="1.5" fill="#9b9b9b"/>
</svg>
<svg style="left:931px;top:633.0px" width="18" height="17" viewBox="0 0 18 17"><rect x="0" y="0" width="18" height="17" rx="2" fill="#d6d6d6"/><path d="M3.5 4.5 L7.5 8 L3.5 11.5" fill="none" stroke="#fff" stroke-width="1.7"/><path d="M8.5 12.5 H14" stroke="#fff" stroke-width="1.7"/></svg>
<svg style="left:977.5px;top:632.0px" width="20" height="19" viewBox="0 0 20 19">
<path d="M9.5 3 H3 Q1 3 1 5 V16 Q1 18 3 18 H14 Q16 18 16 16 V10" fill="none" stroke="#9b9b9b" stroke-width="2"/>
<path d="M6.5 13 L7.2 9.8 L15.5 1.5 Q16.5 0.6 17.5 1.5 L18.2 2.2 Q19 3.2 18.2 4.2 L9.8 12.3 Z" fill="#9b9b9b"/>
</svg>
<svg style="left:1023.5px;top:632.0px" width="18" height="19" viewBox="0 0 18 19">
<rect x="0.5" y="2.5" width="17" height="2.2" rx=".8" fill="#9b9b9b"/><rect x="6" y="0.5" width="6" height="2.5" rx="1" fill="#9b9b9b"/>
<path d="M2 5.5 H16 L15 17 Q14.9 18.5 13.5 18.5 H4.5 Q3.1 18.5 3 17 Z" fill="#9b9b9b"/>
<rect x="5.2" y="7.5" width="1.4" height="9" fill="#fff"/><rect x="8.3" y="7.5" width="1.4" height="9" fill="#fff"/><rect x="11.4" y="7.5" width="1.4" height="9" fill="#fff"/>
</svg>
<svg style="left:157px;top:629.1px" width="32" height="28" viewBox="0 0 32 28">
<rect x="2.1" y="1.9" width="23.1" height="14.9" fill="#e9f9fc" stroke="#7d9fb5" stroke-width="1.4"/>
<path d="M1.4 16.8 H25.9" stroke="#2f6fb8" stroke-width="1.6"/>
<path d="M11.6 17.4 H16.2 L16.8 22.6 H18 V23.8 H8.2 V22.6 H11 Z" fill="#2f78c8"/>
<circle cx="13.8" cy="9.4" r="3" fill="#dff7fb" stroke="#7d9fb5" stroke-width="1.2"/>
<rect x="19.8" y="9.7" width="9" height="16.1" fill="#e2f8fa" stroke="#86bcc6" stroke-width="1.4"/>
<path d="M16 16.8 H24" stroke="#2a5a80" stroke-width="1.3"/>
<path d="M23 14.6 L26 16.8 L23 19 Z" fill="#2a5a80"/>
</svg>
<div class="a" style="left:127px;top:741.0px;width:945px;height:1.2px;background:#ececee"></div>
<div class="t" style="left:211px;top:689.82px;font-size:15px;color:#313136;font-weight:400;font-style:normal;letter-spacing:.15px">Texas Discovery</div>
<div class="t" style="left:211px;top:711.53px;font-size:14px;color:#88888b;font-weight:400;font-style:normal;">InvGate Discovery</div>
<div class="t" style="right:681.4px;top:700.41px;font-size:13.8px;color:#848489;">Failed 3 years ago</div>
<svg style="left:838.5px;top:697.9px" width="19" height="19" viewBox="0 0 19 19"><circle cx="9.5" cy="9.5" r="9.3" fill="#9b9b9b"/><path d="M7.2 5.6 L13.4 9.5 L7.2 13.4 Z" fill="#fff"/></svg>
<svg style="left:884px;top:698.9px" width="20" height="17" viewBox="0 0 20 17">
<path d="M2 1.5 V14.5 H5" fill="none" stroke="#9b9b9b" stroke-width="2"/><path d="M2 8 H5" stroke="#9b9b9b" stroke-width="2"/>
<rect x="7.5" y="1" width="12" height="2" fill="#9b9b9b"/><rect x="9.5" y="7" width="10" height="2" fill="#9b9b9b"/><rect x="9.5" y="13" width="10" height="2" fill="#9b9b9b"/>
<circle cx="2" cy="1.8" r="1.5" fill="#9b9b9b"/><circle cx="6" cy="8" r="1.5" fill="#9b9b9b"/><circle cx="6" cy="14.5" r="1.5" fill="#9b9b9b"/>
</svg>
<svg style="left:931px;top:698.9px" width="18" height="17" viewBox="0 0 18 17"><rect x="0" y="0" width="18" height="17" rx="2" fill="#d6d6d6"/><path d="M3.5 4.5 L7.5 8 L3.5 11.5" fill="none" stroke="#fff" stroke-width="1.7"/><path d="M8.5 12.5 H14" stroke="#fff" stroke-width="1.7"/></svg>
<svg style="left:977.5px;top:697.9px" width="20" height="19" viewBox="0 0 20 19">
<path d="M9.5 3 H3 Q1 3 1 5 V16 Q1 18 3 18 H14 Q16 18 16 16 V10" fill="none" stroke="#9b9b9b" stroke-width="2"/>
<path d="M6.5 13 L7.2 9.8 L15.5 1.5 Q16.5 0.6 17.5 1.5 L18.2 2.2 Q19 3.2 18.2 4.2 L9.8 12.3 Z" fill="#9b9b9b"/>
</svg>
<svg style="left:1023.5px;top:697.9px" width="18" height="19" viewBox="0 0 18 19">
<rect x="0.5" y="2.5" width="17" height="2.2" rx=".8" fill="#9b9b9b"/><rect x="6" y="0.5" width="6" height="2.5" rx="1" fill="#9b9b9b"/>
<path d="M2 5.5 H16 L15 17 Q14.9 18.5 13.5 18.5 H4.5 Q3.1 18.5 3 17 Z" fill="#9b9b9b"/>
<rect x="5.2" y="7.5" width="1.4" height="9" fill="#fff"/><rect x="8.3" y="7.5" width="1.4" height="9" fill="#fff"/><rect x="11.4" y="7.5" width="1.4" height="9" fill="#fff"/>
</svg>
<svg style="left:157.3px;top:693.8px" width="30.0" height="30.0" viewBox="0 0 40 40">
<path d="M21 0.3 A19.7 19.7 0 0 0 16.8 39.3 L16.8 30.3 A11 11 0 0 1 21 8.6 Z" fill="#2d2d2d"/>
<rect x="18.6" y="19" width="2.3" height="20.3" fill="#2d2d2d"/>
<circle cx="26.5" cy="5.8" r="3.8" fill="#2d2d2d"/>
<circle cx="21.6" cy="3.6" r="2" fill="#fff"/>
<circle cx="33.8" cy="11.4" r="2.9" fill="#2d2d2d"/>
<circle cx="37.3" cy="18.7" r="2.4" fill="#2d2d2d"/>
<circle cx="37.3" cy="24.7" r="1.7" fill="#2d2d2d"/>
<circle cx="35.7" cy="29.1" r="1.15" fill="#2d2d2d"/>
<circle cx="33.8" cy="32.3" r=".8" fill="#2d2d2d"/>
<circle cx="31.6" cy="35.5" r=".6" fill="#2d2d2d"/>
<circle cx="29.4" cy="37.4" r=".45" fill="#2d2d2d"/>
</svg>
<div class="t" style="left:211px;top:755.82px;font-size:15px;color:#313136;font-weight:400;font-style:normal;letter-spacing:.15px">VMware Account SAP</div>
<div class="t" style="left:211px;top:777.53px;font-size:14px;color:#88888b;font-weight:400;font-style:normal;">VMWare Account</div>
<div class="t" style="right:681.4px;top:766.41px;font-size:13.8px;color:#848489;">Completed 2 years ago</div>
<svg style="left:838.5px;top:763.8px" width="19" height="19" viewBox="0 0 19 19"><circle cx="9.5" cy="9.5" r="9.3" fill="#9b9b9b"/><path d="M7.2 5.6 L13.4 9.5 L7.2 13.4 Z" fill="#fff"/></svg>
<svg style="left:884px;top:764.8px" width="20" height="17" viewBox="0 0 20 17">
<path d="M2 1.5 V14.5 H5" fill="none" stroke="#9b9b9b" stroke-width="2"/><path d="M2 8 H5" stroke="#9b9b9b" stroke-width="2"/>
<rect x="7.5" y="1" width="12" height="2" fill="#9b9b9b"/><rect x="9.5" y="7" width="10" height="2" fill="#9b9b9b"/><rect x="9.5" y="13" width="10" height="2" fill="#9b9b9b"/>
<circle cx="2" cy="1.8" r="1.5" fill="#9b9b9b"/><circle cx="6" cy="8" r="1.5" fill="#9b9b9b"/><circle cx="6" cy="14.5" r="1.5" fill="#9b9b9b"/>
</svg>
<svg style="left:931px;top:764.8px" width="18" height="17" viewBox="0 0 18 17"><rect x="0" y="0" width="18" height="17" rx="2" fill="#d6d6d6"/><path d="M3.5 4.5 L7.5 8 L3.5 11.5" fill="none" stroke="#fff" stroke-width="1.7"/><path d="M8.5 12.5 H14" stroke="#fff" stroke-width="1.7"/></svg>
<svg style="left:977.5px;top:763.8px" width="20" height="19" viewBox="0 0 20 19">
<path d="M9.5 3 H3 Q1 3 1 5 V16 Q1 18 3 18 H14 Q16 18 16 16 V10" fill="none" stroke="#9b9b9b" stroke-width="2"/>
<path d="M6.5 13 L7.2 9.8 L15.5 1.5 Q16.5 0.6 17.5 1.5 L18.2 2.2 Q19 3.2 18.2 4.2 L9.8 12.3 Z" fill="#9b9b9b"/>
</svg>
<svg style="left:1023.5px;top:763.8px" width="18" height="19" viewBox="0 0 18 19">
<rect x="0.5" y="2.5" width="17" height="2.2" rx=".8" fill="#9b9b9b"/><rect x="6" y="0.5" width="6" height="2.5" rx="1" fill="#9b9b9b"/>
<path d="M2 5.5 H16 L15 17 Q14.9 18.5 13.5 18.5 H4.5 Q3.1 18.5 3 17 Z" fill="#9b9b9b"/>
<rect x="5.2" y="7.5" width="1.4" height="9" fill="#fff"/><rect x="8.3" y="7.5" width="1.4" height="9" fill="#fff"/><rect x="11.4" y="7.5" width="1.4" height="9" fill="#fff"/>
</svg>
<div class="t" style="left:158.3px;top:766.4px;font-size:13.8px;color:#474747;font-weight:700;letter-spacing:-0.75px">vm<span style="font-weight:400;letter-spacing:0">w</span></div>
<div class="a" style="left:1132px;top:155px;width:351px;height:672px;border-radius:9px;background:#fff;box-shadow:0 1px 1px rgba(150,150,165,.3)"></div>
<div class="a" style="left:1133px;top:328px;width:349px;height:104px;background:#f4f4f5"></div>
<div class="a" style="left:1133px;top:241.5px;width:349px;height:1.5px;background:#ebebed"></div>
<div class="a" style="left:1133px;top:328px;width:349px;height:1.5px;background:#ebebed"></div>
<div class="a" style="left:1133px;top:431.5px;width:349px;height:1.5px;background:#ebebed"></div>
<div class="a" style="left:1133px;top:535px;width:349px;height:1.5px;background:#ebebed"></div>
<div class="a" style="left:1133px;top:638px;width:349px;height:1.5px;background:#ebebed"></div>
<div class="t" style="left:1193.5px;top:178.28px;font-size:16.6px;color:#505056;font-weight:400;font-style:normal;">Agent deployment</div>
<div class="t" style="left:1161px;top:203.58px;font-size:14.05px;color:#68686d;font-weight:400;font-style:normal;">Deploy the agent to get data of your assets</div>
<div class="t" style="left:1189px;top:265.34px;font-size:16.2px;color:#505056;font-weight:400;font-style:normal;">Proxies</div>
<div class="t" style="left:1161px;top:290.58px;font-size:14.05px;color:#68686d;font-weight:400;font-style:normal;">Manage proxy servers</div>
<div class="t" style="left:1193px;top:351.38px;font-size:16.6px;color:#505056;font-weight:400;font-style:normal;">Discovery sources</div>
<div class="t" style="left:1161px;top:376.98px;font-size:14.05px;color:#68686d;font-weight:400;font-style:normal;">Integrate services and configure processes to</div>
<div class="t" style="left:1161px;top:393.28px;font-size:14.05px;color:#68686d;font-weight:400;font-style:normal;">discover assets</div>
<div class="t" style="left:1193px;top:455.97px;font-size:16.05px;color:#505056;font-weight:400;font-style:normal;">SNMP Profiles</div>
<div class="t" style="left:1161px;top:480.68px;font-size:14.05px;color:#68686d;font-weight:400;font-style:normal;">Customize the information collected from</div>
<div class="t" style="left:1161px;top:496.88px;font-size:14.05px;color:#68686d;font-weight:400;font-style:normal;">network devices</div>
<div class="t" style="left:1189px;top:558.34px;font-size:16.2px;color:#505056;font-weight:400;font-style:normal;">Printers</div>
<div class="t" style="left:1161px;top:583.88px;font-size:14.05px;color:#68686d;font-weight:400;font-style:normal;">Manage printers detected by the agent and</div>
<div class="t" style="left:1161px;top:600.08px;font-size:14.05px;color:#68686d;font-weight:400;font-style:normal;">connected via USB.</div>
<svg style="left:1161px;top:180px" width="20" height="15" viewBox="0 0 20 15">
<path d="M6.8 1.4 H2.8 V9.3 M11.6 1.4 H16.2 V9.3" fill="none" stroke="#8e8e93" stroke-width="1.7"/>
<path d="M9.2 0.6 V8.4 M6.6 5.8 L9.2 8.6 L11.8 5.8" fill="none" stroke="#8e8e93" stroke-width="1.6"/>
<rect x="0.2" y="11.3" width="18.8" height="2.7" rx="1.3" fill="#8e8e93"/></svg>
<svg style="left:1161px;top:267px" width="15" height="14" viewBox="0 0 15 14">
<rect x="0" y="0" width="15" height="6" rx="2.5" fill="#939397"/><rect x="0" y="7.8" width="15" height="5.6" rx="2.5" fill="#939397"/>
<rect x="9.5" y="2.4" width="4.2" height="1.3" fill="#fff"/><rect x="9.5" y="9.6" width="1.5" height="1.6" fill="#fff"/><rect x="12.2" y="9.6" width="1.5" height="1.6" fill="#fff"/></svg>
<svg style="left:1160px;top:352px" width="21" height="19" viewBox="0 0 34 31">
<path d="M6.2 9.5 V4.6 Q6.2 2.3 8.5 2.3 H22 Q24.3 2.3 24.3 4.6 V9.5" fill="none" stroke="#9c96c6" stroke-width="3.2"/>
<path d="M6.2 21 V26 Q6.2 28.4 8.6 28.4 H24.5" fill="none" stroke="#9c96c6" stroke-width="3.2"/>
<path d="M2.2 11.1 H16.2 L13.4 21.6 H2.2 Q1.2 21.6 1.2 20.6 V12.1 Q1.2 11.1 2.2 11.1 Z" fill="#a79fdc"/>
<circle cx="22.6" cy="18.3" r="5.6" fill="#f4f4f5" stroke="#f4f4f5" stroke-width="4.5"/>
<circle cx="22.6" cy="18.3" r="5.4" fill="#f4f4f5" stroke="#9c96c6" stroke-width="2.6"/>
<path d="M27 23 L32.4 28.2" stroke="#9c96c6" stroke-width="2.6" stroke-linecap="round"/>
</svg>
<svg style="left:1161px;top:458px" width="19" height="12" viewBox="0 0 19 12">
<rect x=".8" y=".8" width="17.4" height="10.4" rx="1.2" fill="none" stroke="#8e8e93" stroke-width="1.6"/>
<text x="3" y="9" font-family="Liberation Sans" font-size="7.6" font-weight="700" fill="#7a7a7f" letter-spacing="-.3">12</text>
<path d="M12.5 4.5 H14.5" stroke="#d0d0d3" stroke-width=".8"/></svg>
<svg style="left:1161px;top:560px" width="16" height="15" viewBox="0 0 16 15">
<rect x="3" y="0" width="10" height="4" rx="1" fill="#8e8e93"/>
<rect x="0" y="4.8" width="16" height="6.5" rx="2" fill="#8e8e93"/>
<rect x="3.5" y="9" width="9" height="5.5" rx="1" fill="#8e8e93" stroke="#fff" stroke-width="1"/></svg>
</body></html>
